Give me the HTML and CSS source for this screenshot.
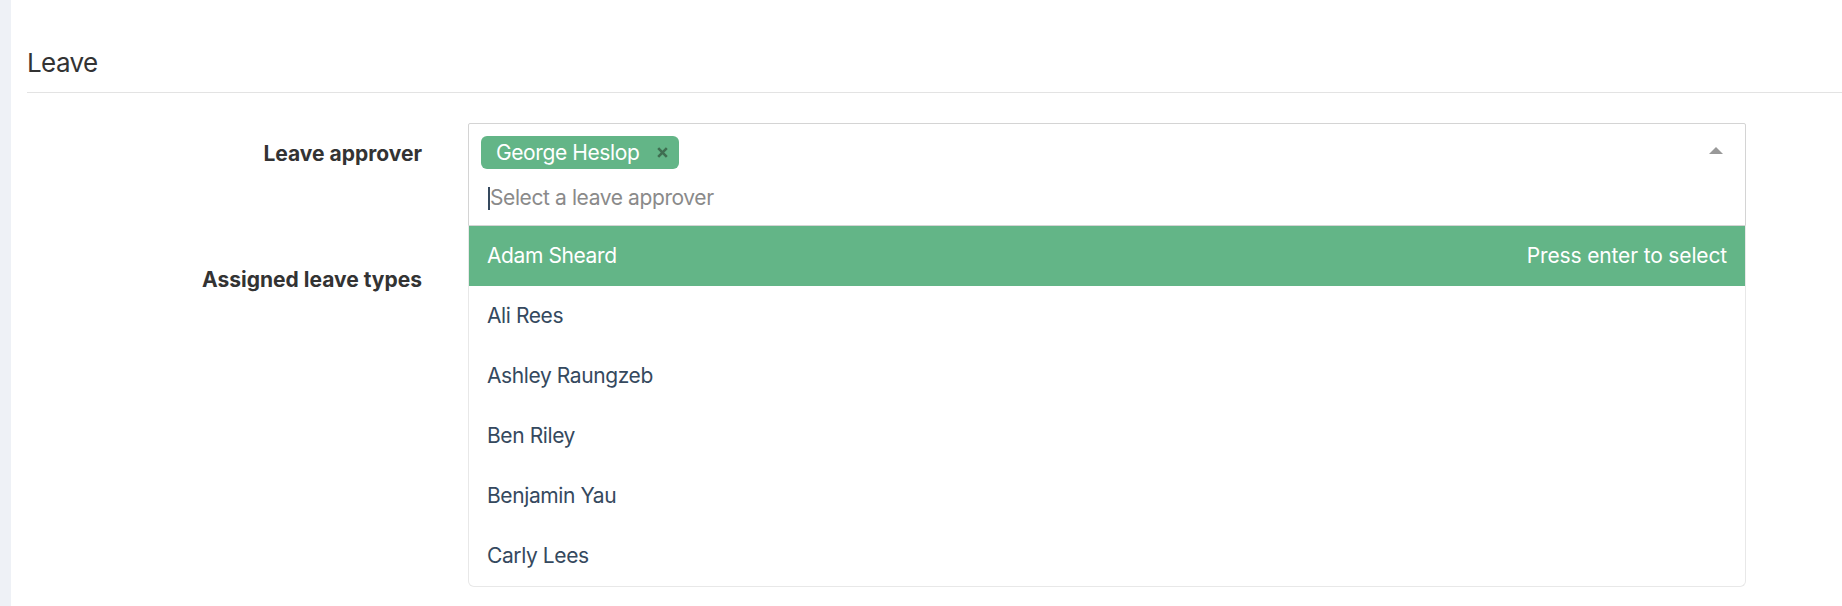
FILE: index.html
```html
<!DOCTYPE html>
<html lang="en">
<head>
<meta charset="utf-8">
<title>Leave</title>
<link rel="stylesheet" href="styles.css">
</head>
<body>
<div class="page">
  <aside class="rail"></aside>
  <main class="content">
    <h2 class="section-title">Leave</h2>
    <div class="form">
      <div class="form-label">Leave approver</div>
      <div class="field">
        <div class="multiselect">
          <div class="ms-box">
            <div class="ms-main">
              <div class="ms-tags">
                <span class="tag"><span class="tag-text">George Heslop</span><svg class="tag-x" width="11" height="11" viewBox="0 0 11 11"><path d="M1.2 1.2 L9.8 9.8 M9.8 1.2 L1.2 9.8" stroke="#3f6e51" stroke-width="2.6" stroke-linecap="butt" fill="none"/></svg></span>
              </div>
              <div class="ms-input"><span class="caret"></span><span class="placeholder">Select a leave approver</span></div>
            </div>
            <svg class="ms-arrow" width="14" height="7" viewBox="0 0 14 7"><polygon points="7,0 14,7 0,7" fill="#999999"/></svg>
          </div>
          <ul class="ms-list">
            <li class="ms-option is-highlight"><span>Adam Sheard</span><span class="hint">Press enter to select</span></li>
            <li class="ms-option"><span>Ali Rees</span></li>
            <li class="ms-option"><span>Ashley Raungzeb</span></li>
            <li class="ms-option"><span>Ben Riley</span></li>
            <li class="ms-option"><span>Benjamin Yau</span></li>
            <li class="ms-option"><span>Carly Lees</span></li>
          </ul>
        </div>
      </div>
      <div class="form-label">Assigned leave types</div>
      <div class="field"><div class="field-empty"></div></div>
    </div>
  </main>
</div>
</body>
</html>
```
FILE: styles.css
```css
* { box-sizing: border-box; }
html, body { margin: 0; padding: 0; background: #ffffff; }
body {
  font-family: Inter, "Liberation Sans", Arial, sans-serif;
  color: #333333;
}
.page {
  display: flex;
  min-height: 606px;
}
.rail {
  width: 11px;
  flex: 0 0 11px;
  background: #eef1f6;
}
.content {
  flex: 1;
  padding-left: 16px;
}
.section-title {
  margin: 0;
  padding: 46px 0 13px 0;
  font-size: 26px;
  line-height: 33px;
  font-weight: 400;
  letter-spacing: -0.6px;
  color: #333333;
  border-bottom: 1px solid #e3e3e3;
}
.form {
  display: grid;
  grid-template-columns: 395px 1278px;
  column-gap: 46px;
  row-gap: 23px;
  padding-top: 30px;
}
.form-label {
  text-align: right;
  font-size: 21px;
  line-height: 30px;
  font-weight: 700;
  color: #333333;
  padding-top: 16px;
}
.multiselect {
  position: relative;
}
.ms-box {
  display: flex;
  border: 1px solid #d4d4d4;
  border-radius: 2px 2px 0 0;
  padding: 12px 0 12px 12px;
  background: #fff;
}
.ms-main {
  flex: 1;
}
.ms-tags {
  display: flex;
}
.tag {
  display: flex;
  align-items: center;
  height: 33px;
  padding: 0 11px 0 15px;
  gap: 18px;
  background: #63b587;
  border-radius: 6px;
  color: #ffffff;
  font-size: 21px;
  line-height: 30px;
  letter-spacing: -0.4px;
}
.tag-x { display: block; }
.ms-input {
  display: flex;
  align-items: center;
  margin-top: 14px;
  height: 30px;
  padding-left: 7px;
  font-size: 21px;
  line-height: 30px;
  letter-spacing: -0.4px;
}
.caret {
  display: inline-block;
  width: 2px;
  height: 23px;
  background: #35495e;
}
.placeholder {
  color: #8a8a8a;
}
.ms-arrow {
  display: block;
  margin: 11px 22px 0 0;
}
.ms-list {
  position: absolute;
  top: 100%;
  left: 0;
  right: 0;
  margin: 0;
  padding: 0;
  list-style: none;
  background: #ffffff;
  border: 1px solid #e8e8e8;
  border-top: none;
  border-radius: 0 0 6px 6px;
  overflow: hidden;
  z-index: 5;
}
.ms-option {
  display: flex;
  align-items: center;
  justify-content: space-between;
  height: 60px;
  padding: 0 18px;
  font-size: 21px;
  line-height: 30px;
  letter-spacing: -0.4px;
  color: #35495e;
}
.ms-option.is-highlight {
  background: #63b587;
  color: #ffffff;
}
.hint {
  font-size: 21px;
  letter-spacing: -0.15px;
}
.field-empty {
  height: 60px;
}
```
